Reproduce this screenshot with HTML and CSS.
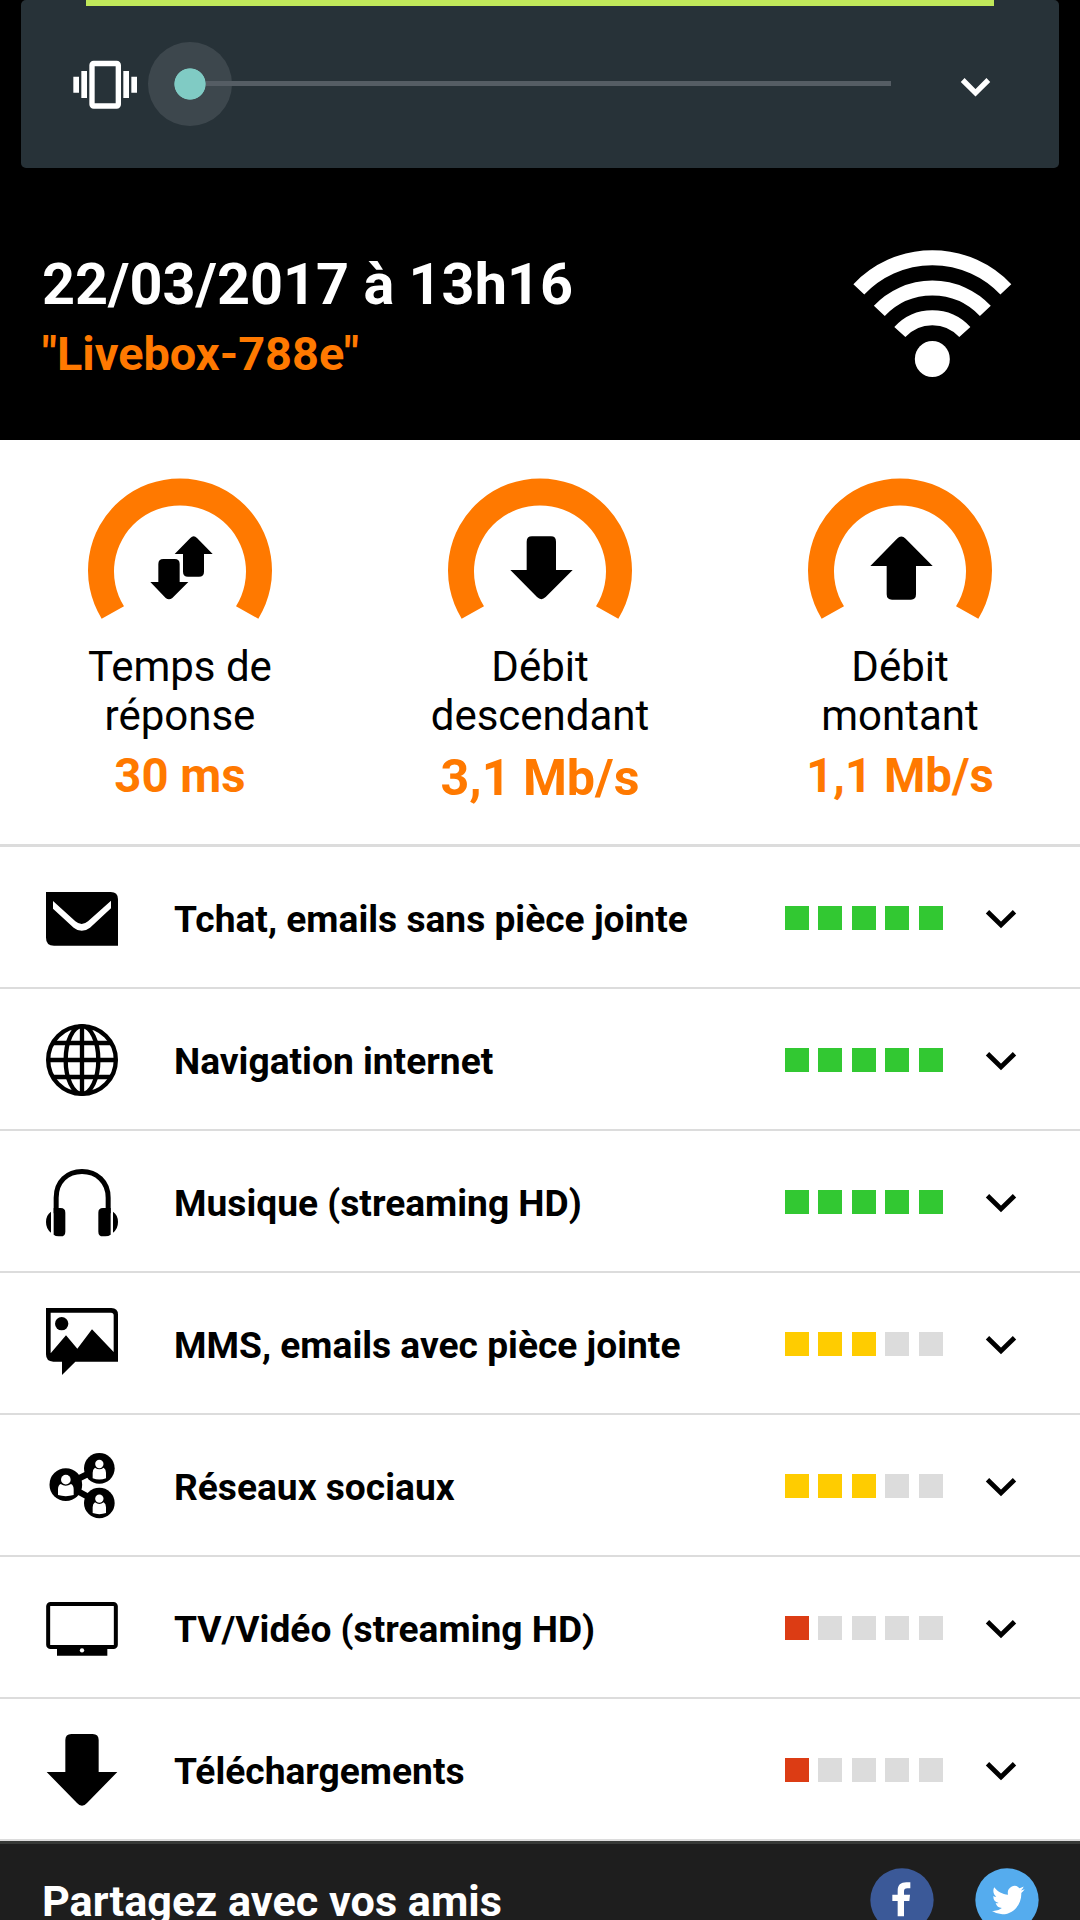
FILE: index.html
```html
<!DOCTYPE html>
<html lang="fr">
<head>
<meta charset="utf-8">
<title>Test de débit</title>
<link rel="stylesheet" href="styles.css">
</head>
<body>
<div class="screen">
  <header class="top">
    <div class="volume">
      <div class="volume-accent"></div>
      <svg class="vibrate" viewBox="220 180 192 147">
        <path fill="#fff" d="M221 230h17v48h-17zM245 213h17v81h-17zM371 213h17v81h-17zM395 230h17v48h-17z"/>
        <rect x="277" y="190.500" width="79" height="127.500" rx="5" fill="none" stroke="#fff" stroke-width="16"/>
      </svg>
      <div class="slider"><div class="thumb"></div><div class="track"></div></div>
      <svg class="volume-chevron" viewBox="540 230 93 60"><path fill="none" stroke="#fff" stroke-width="16" d="M548 239l38.500 38.500 38.500-38.500"/></svg>
    </div>
    <div class="summary">
      <div class="session">
        <h1 class="date">22/03/2017 à 13h16</h1>
        <p class="network">"Livebox-788e"</p>
      </div>
      <svg class="wifi" viewBox="96 54 480 396">
        <g fill="none" stroke="#fff" stroke-width="45">
          <path d="M116.500 178A303.500 303.500 0 0 1 557.500 178"/>
          <path d="M178 242.500A219 219 0 0 1 496 242.500"/>
          <path d="M239.500 306A132 132 0 0 1 434.500 306"/>
        </g>
        <ellipse cx="337" cy="387" rx="52.500" ry="54" fill="#fff"/>
      </svg>
    </div>
  </header>

  <section class="stats">
    <div class="stat">
      <svg class="gauge" viewBox="60 45 600 450">
        <path class="arc" d="M125 476A276 276 0 1 1 595 476L528 439A198 198 0 1 0 192 439Z"/>
        <path d="M344 282L391 234Q401 224 411 234L458 282H432V335Q432 350 417 350H384Q369 350 369 335V282Z"/>
        <path d="M271 366H295V312Q295 297 310 297H344Q359 297 359 312V366H385L337 414Q327 422 317 414Z"/>
      </svg>
      <p class="stat-label">Temps de<br>réponse</p>
      <p class="stat-value">30 ms</p>
    </div>
    <div class="stat">
      <svg class="gauge" viewBox="60 45 600 450">
        <path class="arc" d="M125 476A276 276 0 1 1 595 476L528 439A198 198 0 1 0 192 439Z"/>
        <path d="M271 330H320V245Q320 229 336 229H393Q408 229 408 245V330H458L377 411Q364 424 351 411Z"/>
      </svg>
      <p class="stat-label">Débit<br>descendant</p>
      <p class="stat-value stat-value-main">3,1 Mb/s</p>
    </div>
    <div class="stat">
      <svg class="gauge" viewBox="60 45 600 450">
        <path class="arc" d="M125 476A276 276 0 1 1 595 476L528 439A198 198 0 1 0 192 439Z"/>
        <path d="M271 318L351 236Q364 223 377 236L458 318H408V403Q408 419 393 419H336Q320 419 320 403V318Z"/>
      </svg>
      <p class="stat-label">Débit<br>montant</p>
      <p class="stat-value">1,1 Mb/s</p>
    </div>
  </section>

  <ul class="services">
    <li class="service">
      <svg class="icon" viewBox="138 -39 216 420">
        <path d="M138 96H332Q354 96 354 118V257H162Q138 257 138 233Z"/>
        <path fill="#fff" d="M159 123L226 184Q245 200 264 184L333 122V145L270 203Q245 222 221 203L159 146Z"/>
      </svg>
      <span class="name">Tchat, emails sans pièce jointe</span>
      <span class="bars good"><i class="on"></i><i class="on"></i><i class="on"></i><i class="on"></i><i class="on"></i></span>
      <svg class="chevron" viewBox="0 0 34 24"><path d="M3.500 5.800L17 19 30.500 5.800"/></svg>
    </li>
    <li class="service">
      <svg class="icon" viewBox="138 387 216 420">
        <g fill="none" stroke="#000" stroke-width="13">
          <circle cx="246" cy="600" r="101.500"/>
          <ellipse cx="246" cy="600" rx="49" ry="101.500"/>
          <path d="M246 495V705M144 600H348M158 549H334M158 651H334"/>
        </g>
      </svg>
      <span class="name">Navigation internet</span>
      <span class="bars good"><i class="on"></i><i class="on"></i><i class="on"></i><i class="on"></i><i class="on"></i></span>
      <svg class="chevron" viewBox="0 0 34 24"><path d="M3.500 5.800L17 19 30.500 5.800"/></svg>
    </li>
    <li class="service">
      <svg class="icon" viewBox="138 813 216 420">
        <path fill="none" stroke="#000" stroke-width="15" d="M168.500 1060V1013C168.500 965 202 934.500 246 934.500S324.500 965 324.500 1013V1060"/>
        <path d="M161 1044H182Q196 1044 196 1058V1115Q196 1129 182 1129H176Q166 1129 161 1124ZM332 1044H309Q295 1044 295 1058V1115Q295 1129 309 1129H316Q326 1129 332 1124ZM153 1055V1118Q138 1107 138 1086T153 1055ZM339 1055V1118Q354 1107 354 1086T339 1055Z"/>
      </svg>
      <span class="name">Musique (streaming HD)</span>
      <span class="bars good"><i class="on"></i><i class="on"></i><i class="on"></i><i class="on"></i><i class="on"></i></span>
      <svg class="chevron" viewBox="0 0 34 24"><path d="M3.500 5.800L17 19 30.500 5.800"/></svg>
    </li>
    <li class="service">
      <svg class="icon" viewBox="138 -21 216 420">
        <path fill-rule="evenodd" d="M138 84H334Q354 84 354 104V245H226L186 285V245H160Q138 245 138 223ZM152 98V220L198 166L232 206L276 148L341 216V106Q341 98 333 98Z"/>
        <circle cx="185" cy="131" r="20"/>
      </svg>
      <span class="name">MMS, emails avec pièce jointe</span>
      <span class="bars fair"><i class="on"></i><i class="on"></i><i class="on"></i><i></i><i></i></span>
      <svg class="chevron" viewBox="0 0 34 24"><path d="M3.500 5.800L17 19 30.500 5.800"/></svg>
    </li>
    <li class="service">
      <svg class="icon" viewBox="138 405 216 420">
        <path fill="none" stroke="#000" stroke-width="19" d="M298 565L198 614L298 669"/>
        <circle cx="197.500" cy="614" r="49"/><circle cx="298" cy="565" r="46"/><circle cx="298" cy="669" r="46"/>
        <g fill="#fff">
          <circle cx="197.500" cy="599" r="14.500"/><path d="M182 612Q197 623 213 612Q221 616 221 628V645Q197 652 174 645V628Q174 616 182 612Z"/>
          <circle cx="298" cy="552" r="12.500"/><path d="M285 563Q298 573 311 563Q318 567 318 578V595Q298 602 278 595V578Q278 567 285 563Z"/>
          <circle cx="298" cy="656" r="12.500"/><path d="M285 667Q298 677 311 667Q318 671 318 682V699Q298 706 278 699V682Q278 671 285 667Z"/>
        </g>
      </svg>
      <span class="name">Réseaux sociaux</span>
      <span class="bars fair"><i class="on"></i><i class="on"></i><i class="on"></i><i></i><i></i></span>
      <svg class="chevron" viewBox="0 0 34 24"><path d="M3.500 5.800L17 19 30.500 5.800"/></svg>
    </li>
    <li class="service">
      <svg class="icon" viewBox="138 -9 216 420">
        <rect x="144.500" y="132" width="203" height="129" rx="7" fill="none" stroke="#000" stroke-width="12"/>
        <path d="M171 262H322V287H171Z"/><circle cx="246" cy="271" r="6.500" fill="#fff"/>
      </svg>
      <span class="name">TV/Vidéo (streaming HD)</span>
      <span class="bars poor"><i class="on"></i><i></i><i></i><i></i><i></i></span>
      <svg class="chevron" viewBox="0 0 34 24"><path d="M3.500 5.800L17 19 30.500 5.800"/></svg>
    </li>
    <li class="service">
      <svg class="icon" viewBox="138 417 216 420">
        <path d="M140 636H196V540Q196 522 214 522H278Q296 522 296 540V636H352L261 729Q246 746 231 729Z"/>
      </svg>
      <span class="name">Téléchargements</span>
      <span class="bars poor"><i class="on"></i><i></i><i></i><i></i><i></i></span>
      <svg class="chevron" viewBox="0 0 34 24"><path d="M3.500 5.800L17 19 30.500 5.800"/></svg>
    </li>
  </ul>

  <footer class="share">
    <span class="share-title">Partagez avec vos amis</span>
    <svg class="social" viewBox="328 443 192 192">
      <circle cx="424" cy="539" r="95" fill="#3b5998"/>
      <path fill="#fff" d="M411 588V542H395V523H411V512C411 494 420 486 437 486H449V504H440C433 504 430 507 430 513V523H448L446 542H430V588Z"/>
    </svg>
    <svg class="social" viewBox="643 443 192 192">
      <circle cx="739" cy="539" r="95" fill="#55acee"/>
      <path fill="#fff" transform="translate(694 487) scale(4.080 4.350)" d="M23.953 4.570a10 10 0 0 1-2.825.775 4.958 4.958 0 0 0 2.163-2.723c-.951.555-2.005.959-3.127 1.184a4.920 4.920 0 0 0-8.384 4.482C7.690 8.095 4.067 6.130 1.640 3.162a4.822 4.822 0 0 0-.666 2.475c0 1.710.870 3.213 2.188 4.096a4.904 4.904 0 0 1-2.228-.616v.060a4.923 4.923 0 0 0 3.946 4.827 4.996 4.996 0 0 1-2.212.085 4.936 4.936 0 0 0 4.604 3.417 9.867 9.867 0 0 1-6.102 2.105c-.390 0-.779-.023-1.170-.067a13.995 13.995 0 0 0 7.557 2.209c9.053 0 13.998-7.496 13.998-13.985 0-.210 0-.420-.015-.630A9.935 9.935 0 0 0 24 4.590z"/>
    </svg>
  </footer>
</div>
</body>
</html>
```
FILE: styles.css
```css
* { box-sizing: border-box; margin: 0; padding: 0; }

body {
  width: 1080px;
  height: 1920px;
  overflow: hidden;
  background: #fff;
  color: #000;
  font-family: Roboto, "Liberation Sans", sans-serif;
}

svg { display: block; flex: none; }

.screen { display: flex; flex-direction: column; height: 1920px; overflow: hidden; }

.top { height: 440px; background: #000; }

.volume {
  position: relative;
  display: flex;
  align-items: flex-start;
  height: 168px;
  margin: 0 21px;
  padding-left: 52.400px;
  background: #273238;
  border-radius: 5px;
}

.volume-accent {
  position: absolute;
  top: 0;
  left: 65px;
  width: 908px;
  height: 6px;
  background: #c0e85a;
}

.vibrate { width: 64px; height: 49px; margin-top: 60px; }

.slider { display: flex; align-items: center; height: 84px; margin: 41.500px 0 0 10.200px; }

.thumb {
  width: 84px;
  height: 84px;
  border-radius: 50%;
  background: radial-gradient(circle, #80cbc4 15.300px, #3d474d 16px);
}

.track { width: 685.500px; height: 5px; margin-left: -26px; background: #555d64; }

.volume-chevron { width: 31px; height: 20px; margin: 77px 0 0 69px; }

.summary { display: flex; justify-content: space-between; padding: 80px 68px 0 42px; }

.date { margin-top: 2px; color: #fff; font-size: 57.600px; line-height: 70px; font-weight: 700; }

.network { margin-top: 6px; color: #ff7900; font-size: 46.900px; line-height: 56px; font-weight: 700; }

.wifi { width: 160px; height: 132px; }

.stats {
  display: grid;
  grid-template-columns: repeat(3, 1fr);
  height: 407px;
  padding-top: 35px;
  border-bottom: 3px solid #dcdcdc;
  text-align: center;
}

.gauge { width: 200px; height: 150px; margin: 0 auto; }

.arc { fill: #ff7900; }

.stat-label { margin-top: 17px; font-size: 42px; line-height: 49px; }

.stat-value { margin-top: 8px; color: #ff7900; font-size: 47.300px; line-height: 56px; font-weight: 700; }

.stat-value-main { font-size: 50.200px; line-height: 60px; }

.services { list-style: none; }

.service {
  display: flex;
  align-items: center;
  height: 142px;
  padding: 0 62px 0 46px;
  border-bottom: 2px solid #dcdcdc;
}

.icon { width: 72px; height: 140px; }

.name { flex: 1; margin-left: 56px; padding-top: 5px; font-size: 37.150px; line-height: 44px; font-weight: 700; }

.bars { display: flex; gap: 9.500px; margin-top: 2px; }

.bars i { width: 24px; height: 24px; background: #dcdcdc; }

.good .on { background: #32c832; }
.fair .on { background: #ffcc00; }
.poor .on { background: #dc3c14; }

.chevron { width: 34px; height: 24px; margin: 2px 0 0 41.500px; }

.chevron path { fill: none; stroke: #000; stroke-width: 4.800; }

.share {
  display: flex;
  align-items: flex-start;
  height: 79px;
  padding: 24px 41.500px 0 42px;
  overflow: hidden;
  background: #1e1e1e;
  border-top: 3px solid #373937;
}

.share-title { flex: 1; margin-top: 8px; color: #fff; font-size: 43.200px; line-height: 52px; font-weight: 700; }

.social { width: 64px; height: 64px; }

.social + .social { margin-left: 41px; }
```
